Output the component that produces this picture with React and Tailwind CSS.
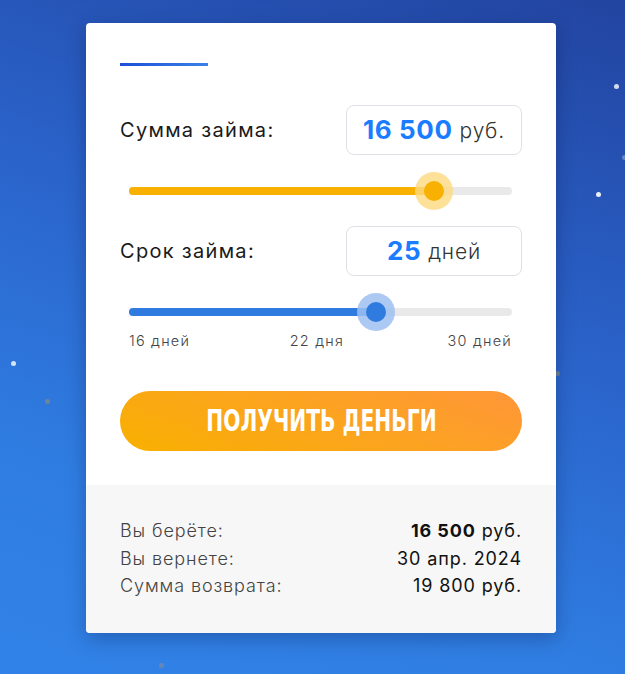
import React from 'react';

const font = { fontFamily: 'Inter, "Noto Sans", sans-serif' };

function ValueBox({ value, unit }) {
  return (
    <div className="flex h-[50px] w-[176px] items-center justify-center gap-[7px] rounded-[8px] border border-[#dfe0e6] bg-white">
      <span className="text-[26px] font-bold leading-none tracking-[0.6px] text-[#1a7cff]">{value}</span>
      <span className="text-[21px] font-light leading-none tracking-[0.8px] text-[#333]">{unit}</span>
    </div>
  );
}

function Slider({ pct, fill, thumb, halo }) {
  return (
    <div className="relative ml-[9px] mr-[10px] h-[38px]">
      <div className="absolute left-0 right-0 top-[16px] h-[8px] rounded-full bg-[#e9e9e9]" />
      <div className={`absolute left-0 top-[16px] h-[8px] rounded-l-full ${fill}`} style={{ width: pct + '%' }} />
      <div
        className={`absolute top-[1px] flex h-[38px] w-[38px] -translate-x-1/2 items-center justify-center rounded-full ${halo}`}
        style={{ left: pct + '%' }}
      >
        <div className={`h-[20px] w-[20px] rounded-full ${thumb}`} />
      </div>
    </div>
  );
}

const dots = [
  'left-[614px] top-[84px] bg-white/80',
  'left-[622px] top-[155px] bg-white/30',
  'left-[596px] top-[192px] bg-white/90',
  'left-[11px] top-[361px] bg-white/80',
  'left-[45px] top-[399px] bg-[#8a8a7a]/70',
  'left-[555px] top-[371px] bg-[#8a8a7a]/70',
  'left-[159px] top-[663px] bg-[#8a8a9a]/60',
];

export default function App() {
  return (
    <div
      className="relative min-h-screen w-full overflow-hidden bg-[linear-gradient(200deg,#2244a0_0%,#2a62c9_40%,#2f7de2_75%,#3182e8_100%)] pt-[23px]"
      style={font}
    >
      {dots.map((d, i) => (
        <span key={i} className={`absolute h-[5px] w-[5px] rounded-full ${d}`} />
      ))}

      <div className="relative ml-[86px] w-[470px] overflow-hidden rounded-[4px] bg-white shadow-[0_6px_20px_rgba(0,0,40,0.25)]">
        <div className="px-[34px] pt-[40px] pb-[34px]">
          <div className="h-[3px] w-[88px] bg-[linear-gradient(90deg,#1d4ed8,#3b82e6)]" />

          <div className="mt-[39px] flex items-center justify-between">
            <span className="text-[20px] tracking-[1.3px] text-[#1a1a1a]">Сумма займа:</span>
            <ValueBox value="16 500" unit="руб." />
          </div>
          <div className="mt-[16px]">
            <Slider pct={79.6} fill="bg-[#f8b100]" thumb="bg-[#f8b100]" halo="bg-[#fcd97f]/80" />
          </div>

          <div className="mt-[17px] flex items-center justify-between">
            <span className="text-[20px] tracking-[1.3px] text-[#1a1a1a]">Срок займа:</span>
            <ValueBox value="25" unit="дней" />
          </div>
          <div className="mt-[16px]">
            <Slider pct={64.5} fill="bg-[#2f7be0]" thumb="bg-[#2f7be0]" halo="bg-[#9ec0f2]/85" />
          </div>
          <div className="ml-[9px] mr-[10px] mt-[1px] flex justify-between text-[14.5px] font-light leading-[20px] tracking-[1.2px] text-[#444]">
            <span>16 дней</span>
            <span className="mr-[4px]">22 дня</span>
            <span>30 дней</span>
          </div>

          <button className="mt-[40px] flex h-[60px] w-full items-center justify-center rounded-full bg-[linear-gradient(20deg,#f8b000_0%,#fca321_55%,#ff9639_100%)]">
            <span
              className="inline-block scale-x-[0.75] text-[30px] font-bold uppercase leading-none text-white"
              style={{ fontFamily: '"DejaVu Sans Condensed", "Liberation Sans", sans-serif' }}
            >
              Получить деньги
            </span>
          </button>
        </div>

        <div className="bg-[#f7f7f7] px-[34px] pt-[32px] pb-[33px] text-[18px] leading-[27.5px] tracking-[0.9px]">
          <div className="flex justify-between">
            <span className="font-light text-[#444]">Вы берёте:</span>
            <span className="text-[#111]"><b className="font-bold">16 500</b> руб.</span>
          </div>
          <div className="flex justify-between">
            <span className="font-light text-[#444]">Вы вернете:</span>
            <span className="text-[#111]">30 апр. 2024</span>
          </div>
          <div className="flex justify-between">
            <span className="font-light text-[#444]">Сумма возврата:</span>
            <span className="text-[#111]">19 800 руб.</span>
          </div>
        </div>
      </div>
    </div>
  );
}
